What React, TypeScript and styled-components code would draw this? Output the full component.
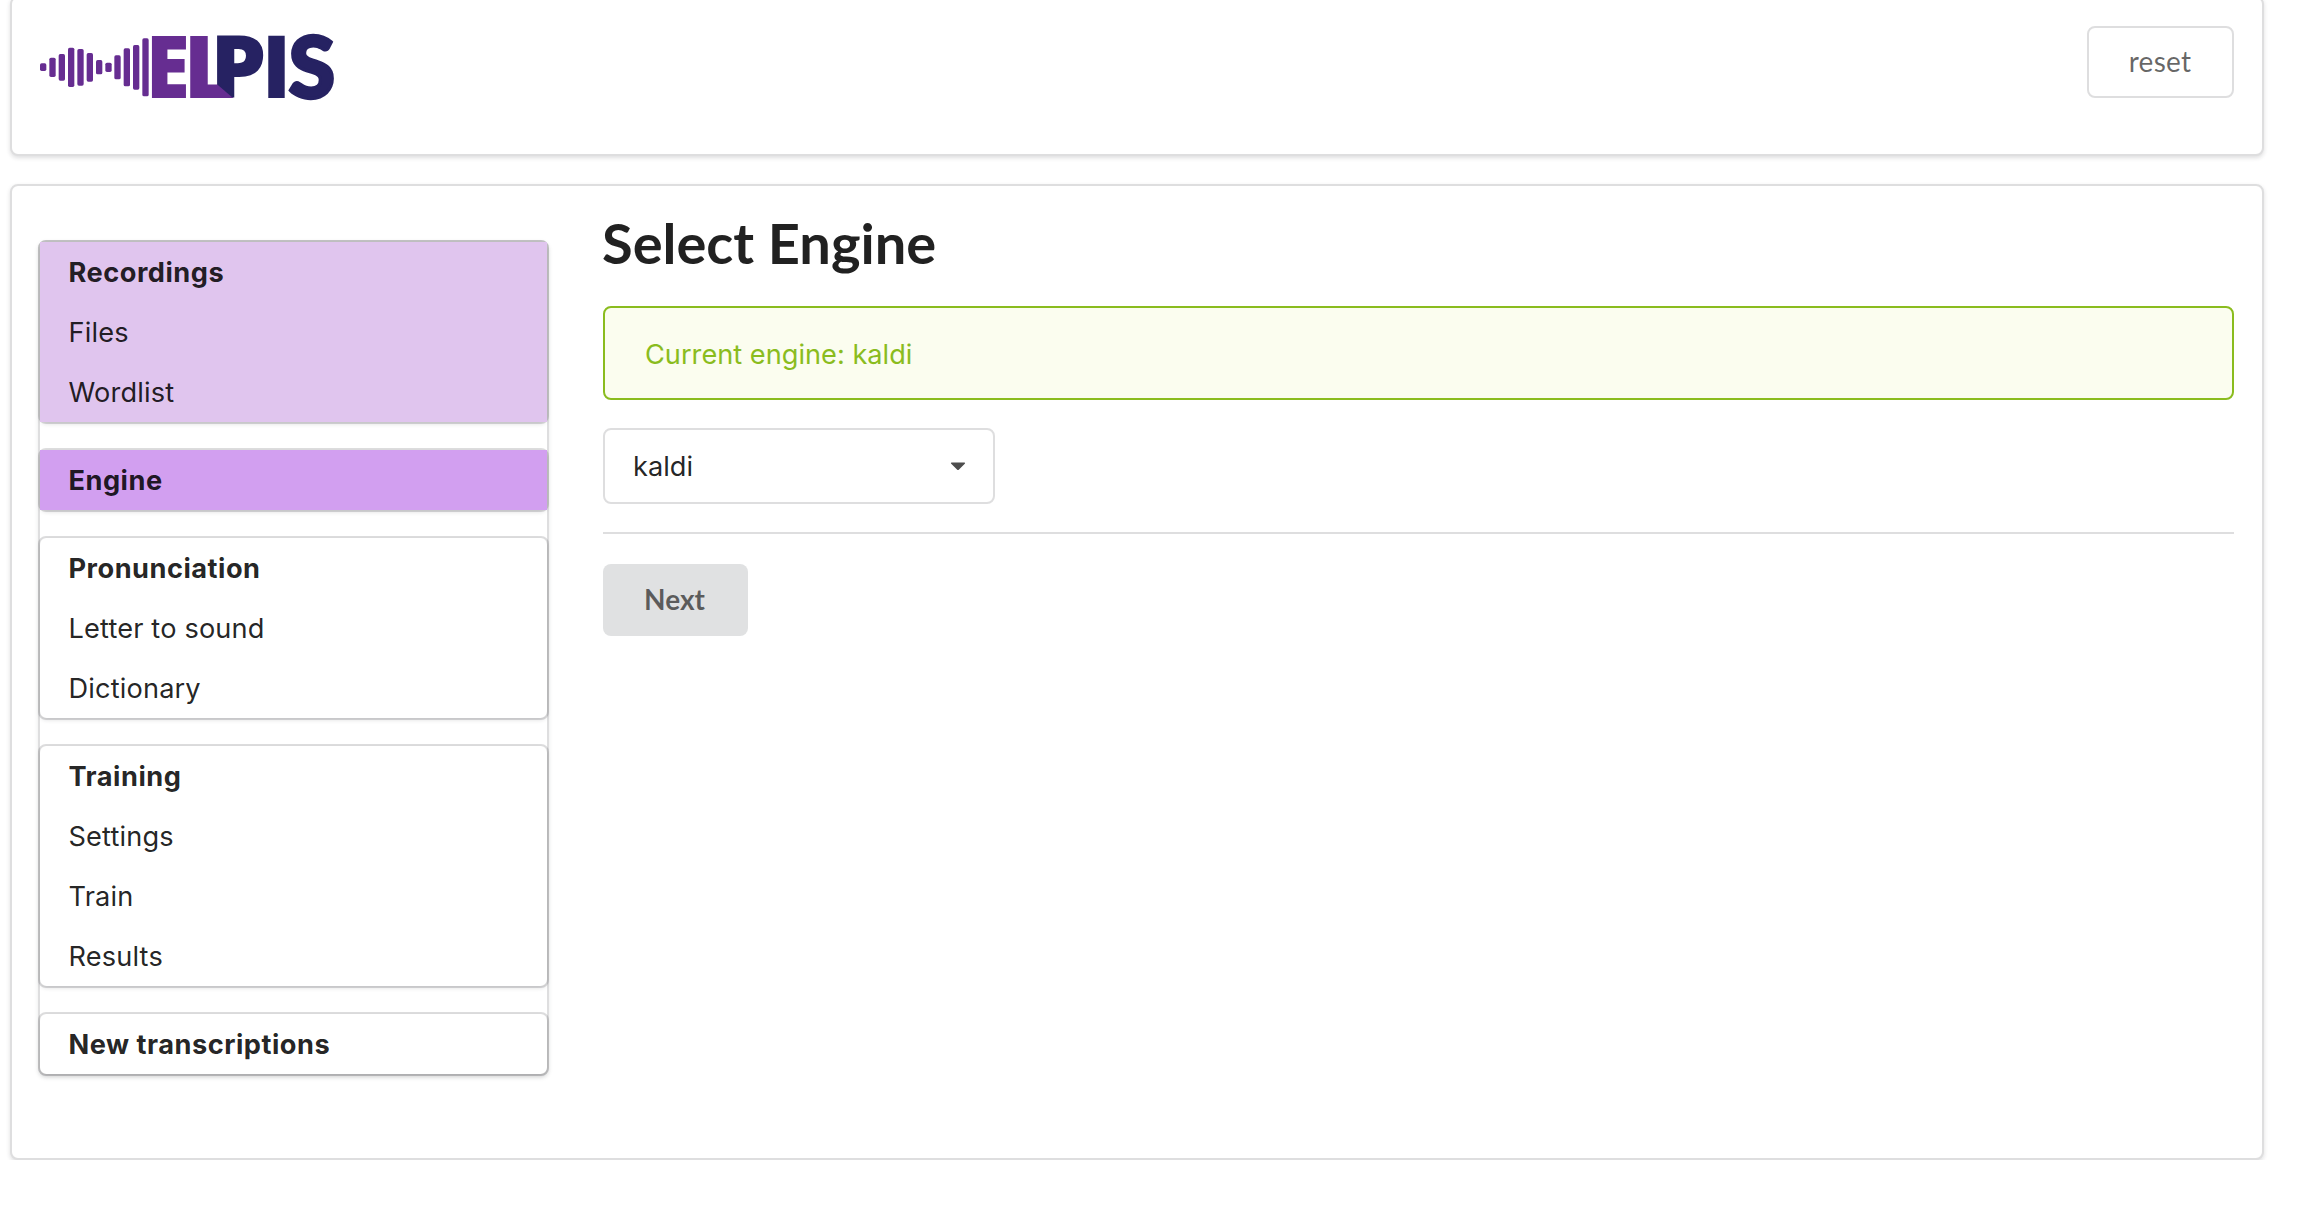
import React from 'react';
import styled, { createGlobalStyle } from 'styled-components';

const lineColor = 'rgba(34, 36, 38, 0.15)';
const textColor = 'rgba(0, 0, 0, 0.87)';
const uiFont = 'Inter, "Noto Sans", sans-serif';
const headingFont = 'Lato, "Noto Sans", sans-serif';

const GlobalStyle = createGlobalStyle`
  *, *::before, *::after { box-sizing: border-box; }
  body {
    margin: 0;
    background: #fff;
    color: ${textColor};
    font-family: ${uiFont};
    font-size: 27.2px;
    line-height: 40px;
  }
`;

const Page = styled.div`
  display: flow-root;
  padding: 0 36px 0 10px;
`;

const Segment = styled.section`
  border: 2px solid ${lineColor};
  border-radius: 8px;
  box-shadow: 0 2px 4px 0 ${lineColor};
  padding: 28px;
`;

const HeaderBar = styled(Segment).attrs({ as: 'header' })`
  display: flex;
  justify-content: space-between;
  align-items: flex-start;
  height: 160px;
  margin: -4px 0 28px;
`;

const Body = styled(Segment).attrs({ as: 'main' })`
  display: flex;
  align-items: flex-start;
  gap: 54px;
  height: 976px;
`;

const LogoArt = styled.svg`
  display: block;
  overflow: visible;
  width: 296px;
  height: 68px;
  margin-top: 7px;
`;

const Button = styled.button<{ $basic?: boolean }>`
  display: block;
  height: 72px;
  width: ${(p) => (p.$basic ? 147 : 145)}px;
  padding: ${(p) => (p.$basic ? '0 1px 2px 0' : '0 2px 2px 0')};
  border: ${(p) => (p.$basic ? `2px solid ${lineColor}` : 'none')};
  border-radius: 8px;
  background: ${(p) => (p.$basic ? 'transparent' : '#e0e1e2')};
  color: rgba(0, 0, 0, 0.6);
  font-family: ${headingFont};
  font-size: 28px;
  font-weight: ${(p) => (p.$basic ? 400 : 700)};
  letter-spacing: ${(p) => (p.$basic ? '0.3px' : '0')};
  line-height: 28px;
`;

const Menu = styled.nav`
  flex: none;
  width: 511px;
  margin: 26px 0 0 -2px;
  border: 2px solid ${lineColor};
  border-radius: 8px;
  box-shadow: 0 2px 4px 0 rgba(34, 36, 38, 0.1);
`;

const Group = styled.div`
  margin: 24px -2px;
  border: 2px solid ${lineColor};
  border-radius: 8px;

  &:first-child { margin-top: -2px; }
  &:last-child { margin-bottom: -2px; }
`;

const GroupItems = styled.div`
  border-radius: 7px;
  box-shadow: 0 2px 4px 0 ${lineColor};
`;

type Tone = 'done' | 'active' | 'idle';

const toneColor: Record<Tone, string> = {
  done: '#e0c5ee',
  active: '#d29ff0',
  idle: 'transparent',
};

const Item = styled.a<{ $tone: Tone; $title?: boolean }>`
  display: block;
  height: 60px;
  padding-left: 28.5px;
  line-height: 62px;
  background: ${(p) => toneColor[p.$tone]};
  font-weight: ${(p) => (p.$title ? 700 : 400)};
  letter-spacing: ${(p) => (p.$title ? '0.5px' : '0.15px')};
`;

const Content = styled.div`
  flex: 1;
  min-width: 0;
`;

const Title = styled.h1`
  margin: -6px 0 28px -1px;
  font-family: ${headingFont};
  font-size: 56px;
  font-weight: 700;
  line-height: 70px;
`;

const Message = styled.div`
  display: flex;
  align-items: center;
  height: 94px;
  padding: 3px 40px 0;
  border: 2px solid #8abc1e;
  border-radius: 8px;
  background: #fbfdef;
  color: #8abc1e;
`;

const Dropdown = styled.div`
  display: flex;
  align-items: center;
  justify-content: space-between;
  width: 392px;
  height: 76px;
  margin-top: 28px;
  padding: 1px 27px 0 28px;
  border: 2px solid ${lineColor};
  border-radius: 8px;
`;

const Caret = styled.svg`
  display: block;
  width: 16px;
  height: 9px;
`;

const Divider = styled.hr`
  height: 2px;
  margin: 28px 0 30px;
  border: 0;
  background: ${lineColor};
`;

const Glyph = styled.text<{ $round?: boolean }>`
  font-family: ${(p) => (p.$round ? 'Lato' : '"Open Sans"')}, sans-serif;
  font-size: ${(p) => (p.$round ? 257 : 259)}px;
  font-weight: ${(p) => (p.$round ? 900 : 800)};
`;

const purple = '#662d91';
const navy = '#262262';

const bars: [number, number, number][] = [
  [120, 190, 213], [148, 173, 231], [176, 162, 242], [204, 143, 261],
  [232, 147, 257], [260, 159, 245], [288, 180, 223], [316, 188, 216],
  [343, 166, 238], [371, 145, 259], [399, 135, 269], [427, 115, 289],
];

function Logo() {
  return (
    <LogoArt viewBox="120 99 888 204" role="img" aria-label="Elpis">
      {bars.map(([x, top, bottom]) => (
        <rect key={x} x={x} y={top} width={19} height={bottom - top} rx={5} fill={purple} />
      ))}
      <Glyph fill={purple} transform="translate(437 294) scale(0.93 1)">E</Glyph>
      <Glyph fill={purple} transform="translate(550 294) scale(1.05 1)">L</Glyph>
      <Glyph fill={navy} transform="translate(631 294) scale(1.03 1)">P</Glyph>
      <path d="M651 253 L699 294 L651 294 Z" fill={purple} />
      <Glyph fill={navy} transform="translate(785 294) scale(0.98 1)">I</Glyph>
      <Glyph $round fill={navy} stroke={navy} strokeWidth={10} transform="translate(866 294) scale(0.98 1)">S</Glyph>
    </LogoArt>
  );
}

const groups: { tone: Tone; title: string; steps: string[] }[] = [
  { tone: 'done', title: 'Recordings', steps: ['Files', 'Wordlist'] },
  { tone: 'active', title: 'Engine', steps: [] },
  { tone: 'idle', title: 'Pronunciation', steps: ['Letter to sound', 'Dictionary'] },
  { tone: 'idle', title: 'Training', steps: ['Settings', 'Train', 'Results'] },
  { tone: 'idle', title: 'New transcriptions', steps: [] },
];

export default function App() {
  return (
    <Page>
      <GlobalStyle />
      <HeaderBar>
        <Logo />
        <Button $basic>reset</Button>
      </HeaderBar>
      <Body>
        <Menu>
          {groups.map((group) => (
            <Group key={group.title}>
              <GroupItems>
                <Item $tone={group.tone} $title>{group.title}</Item>
                {group.steps.map((step) => (
                  <Item key={step} $tone={group.tone}>{step}</Item>
                ))}
              </GroupItems>
            </Group>
          ))}
        </Menu>
        <Content>
          <Title>Select Engine</Title>
          <Message>Current engine: kaldi</Message>
          <Dropdown>
            kaldi
            <Caret viewBox="0 0 16 9">
              <path d="M1.5 0.5 H14.5 Q15.6 0.8 14.8 1.8 L9 7.6 Q8 8.6 7 7.6 L1.2 1.8 Q0.4 0.8 1.5 0.5 Z" fill="#4d4d4d" />
            </Caret>
          </Dropdown>
          <Divider />
          <Button>Next</Button>
        </Content>
      </Body>
    </Page>
  );
}
